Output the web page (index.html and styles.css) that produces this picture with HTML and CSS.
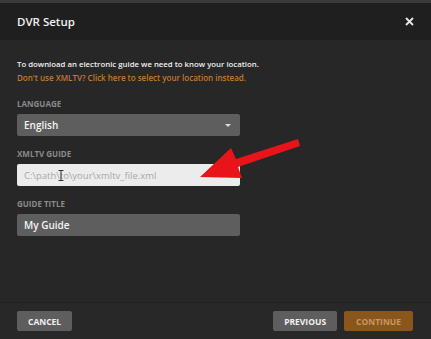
FILE: index.html
```html
<!DOCTYPE html>
<html>
<head>
  <title>DVR Setup</title>
  <link rel="stylesheet" href="styles.css">
</head>
<body>
  <div id="modal">
    <div id="header">
      <h1 class="title">DVR Setup</h1>
      <svg class="close" width="9" height="9" viewBox="0 0 9 9">
        <path d="M1 1 L8 8 M8 1 L1 8" stroke="#e6e6e6" stroke-width="1.8" fill="none"/>
      </svg>
    </div>

    <div id="content">
      <p class="intro">To download an electronic guide we need to know your location.</p>
      <p class="link">Don't use XMLTV? Click here to select your location instead.</p>

      <div class="field">
        <label class="field-label">LANGUAGE</label>
        <div class="select">
          <span>English</span>
          <span class="caret"></span>
        </div>
      </div>

      <div class="field">
        <label class="field-label">XMLTV GUIDE</label>
        <div class="input light">
          <span class="placeholder">C:\path\to\your\xmltv_file.xml</span>
          <!-- text cursor from the screenshot -->
          <svg class="ibeam" width="6" height="11" viewBox="0 0 6 11">
            <path d="M0.5 0.5 H5.5 M3 0.5 V10.5 M0.5 10.5 H5.5" stroke="#333" stroke-width="1" fill="none"/>
          </svg>
        </div>
      </div>

      <div class="field">
        <label class="field-label">GUIDE TITLE</label>
        <div class="input dark">My Guide</div>
      </div>

      <svg class="arrow" width="120" height="60" viewBox="0 0 120 60">
        <path d="M116 2 L54 22 L49 11 L18 40 L60 41 L56 30 L118 9 Z" fill="#e8141a"/>
      </svg>
    </div>

    <div id="footer">
      <button class="btn">CANCEL</button>
      <div class="right">
        <button class="btn">PREVIOUS</button>
        <button class="btn primary">CONTINUE</button>
      </div>
    </div>
  </div>
</body>
</html>
```

FILE: styles.css
```css
html, body {
  margin: 0;
  padding: 0;
  height: 100%;
}

body {
  font-family: "Open Sans", Arial, sans-serif;
  background-color: #3a3a3a;
  padding-top: 3px;
  box-sizing: border-box;
}

#modal {
  height: 336px;
  background-color: #272727;
  display: flex;
  flex-direction: column;
}

#header {
  height: 37px;
  background-color: #1f1f1f;
  display: flex;
  align-items: center;
  justify-content: space-between;
  padding: 0 17px 0 17px;
}

.title {
  margin: 0;
  font-size: 11.5px;
  font-weight: 600;
  color: #f2f2f2;
}

#content {
  flex-grow: 1;
  padding: 17px 17px 0 17px;
  position: relative;
}

.intro, .link {
  margin: 0;
  font-size: 7.8px;
  font-weight: 600;
  line-height: 14px;
}

.intro {
  color: #f0f0f0;
}

.link {
  color: #c47a2c;
  font-size: 8px;
}

.field {
  margin-top: 12px;
  width: 223px;
}

.field:first-of-type {
  margin-top: 13px;
}

.field-label {
  display: block;
  font-size: 8px;
  font-weight: 700;
  color: #8a8a8a;
  margin-bottom: 4px;
  line-height: 12px;
}

.select, .input {
  height: 22px;
  border-radius: 2px;
  box-sizing: border-box;
  padding: 0 7px;
  display: flex;
  align-items: center;
  font-size: 10px;
  font-weight: 600;
}

.select {
  background-color: #5e5e5e;
  color: #f5f5f5;
  justify-content: space-between;
}

.caret {
  width: 0;
  height: 0;
  border-left: 3px solid transparent;
  border-right: 3px solid transparent;
  border-top: 3px solid #dcdcdc;
  margin-right: 2px;
}

.input.light {
  background-color: #ececec;
  position: relative;
}

.placeholder {
  color: #a8a8a8;
  font-weight: 400;
  font-size: 9.5px;
}

.ibeam {
  position: absolute;
  left: 41px;
  top: 6px;
}

.input.dark {
  background-color: #5e5e5e;
  color: #f5f5f5;
}

.arrow {
  position: absolute;
  left: 182px;
  top: 97px;
}

#footer {
  height: 36px;
  border-top: 1px solid #202020;
  background-color: #282828;
  display: flex;
  align-items: center;
  justify-content: space-between;
  padding: 0 18px 0 17px;
}

.right {
  display: flex;
  gap: 7px;
}

.btn {
  height: 20px;
  padding: 0 11px;
  border: none;
  border-radius: 2px;
  background-color: #5e5e5e;
  color: #f0f0f0;
  font-family: "Open Sans", Arial, sans-serif;
  font-size: 8.5px;
  font-weight: 700;
}

.btn.primary {
  background-color: #8a561c;
  color: #c89660;
  padding: 0 12px;
}
```
